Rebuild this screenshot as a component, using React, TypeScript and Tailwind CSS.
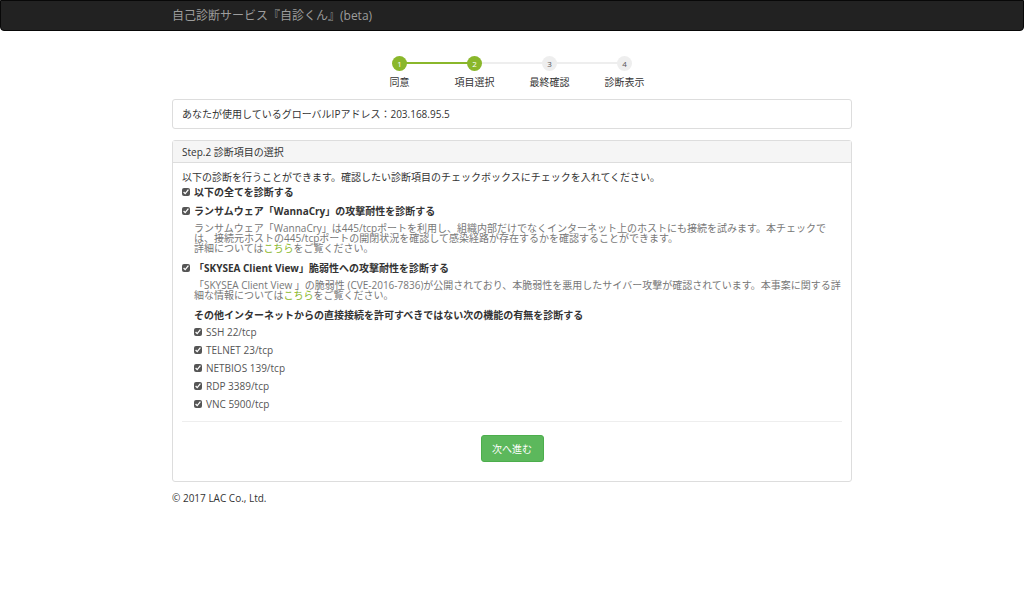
const steps = [
  { n: '1', label: '同意', done: true },
  { n: '2', label: '項目選択', done: true },
  { n: '3', label: '最終確認', done: false },
  { n: '4', label: '診断表示', done: false },
];

const ports = ['SSH 22/tcp', 'TELNET 23/tcp', 'NETBIOS 139/tcp', 'RDP 3389/tcp', 'VNC 5900/tcp'];

function Check() {
  return (
    <input type="checkbox" defaultChecked className="w-[8px] h-[8px] m-0 mr-[4px] accent-[#555] shrink-0" />
  );
}

export default function App() {
  return (
    <div className="min-h-[592px] bg-white text-[#333] text-[10px] leading-[10px]" style={{ fontFamily: '"Open Sans", "Noto Sans CJK JP", sans-serif' }}>
      <div className="h-[31px] bg-[#222] border border-[#080808] rounded-b-[4px]">
        <div className="w-[680px] mx-auto pt-[8px] text-[12px] leading-[14px] text-[#9d9d9d]">自己診断サービス『自診くん』(beta)</div>
      </div>

      <div className="w-[680px] mx-auto">
        {/* stepper */}
        <div className="flex pl-[190px] pt-[25px] h-[62px]">
          {steps.map((s, i) => (
            <div key={s.n} className="relative w-[75px] flex flex-col items-center">
              {i < steps.length - 1 && (
                <div className={`absolute top-[6px] left-[37px] w-[75px] h-[2px] ${steps[i + 1].done ? 'bg-[#8ab72b]' : 'bg-[#eee]'}`} />
              )}
              <div className={`relative z-10 w-[15px] h-[15px] rounded-full flex items-center justify-center text-[8px] ${s.done ? 'bg-[#8ab72b] text-white' : 'bg-[#eee] text-[#555]'}`}>{s.n}</div>
              <div className="mt-[5px] text-[10px] leading-[12px]">{s.label}</div>
            </div>
          ))}
        </div>

        <div className="mt-[6px] border border-[#ddd] rounded-[3px] h-[30px] px-[9px] flex items-center text-[10px]">
          あなたが使用しているグローバルIPアドレス：203.168.95.5
        </div>

        <div className="mt-[11px] border border-[#ddd] rounded-[3px]">
          <div className="h-[22px] bg-[#f5f5f5] border-b border-[#ddd] px-[9px] flex items-center">Step.2 診断項目の選択</div>
          <div className="px-[9px] pt-[9px] pb-[19px]">
            <div>以下の診断を行うことができます。確認したい診断項目のチェックボックスにチェックを入れてください。</div>
            <label className="flex items-center mt-[5px] font-bold"><Check />以下の全てを診断する</label>
            <label className="flex items-center mt-[9px] font-bold"><Check />ランサムウェア「WannaCry」の攻撃耐性を診断する</label>
            <div className="pl-[12px] mt-[7px] text-[#777] leading-[10px]">
              ランサムウェア「WannaCry」は445/tcpポートを利用し、組織内部だけでなくインターネット上のホストにも接続を試みます。本チェックでは、接続元ホストの445/tcpポートの開閉状況を確認して感染経路が存在するかを確認することができます。<br />
              詳細については<span className="text-[#8ab72b]">こちら</span>をご覧ください。
            </div>
            <label className="flex items-center mt-[10px] font-bold"><Check />「SKYSEA Client View」脆弱性への攻撃耐性を診断する</label>
            <div className="pl-[12px] mt-[7px] text-[#777] leading-[10px]">
              「SKYSEA Client View 」の脆弱性 (CVE-2016-7836)が公開されており、本脆弱性を悪用したサイバー攻撃が確認されています。本事案に関する詳細な情報については<span className="text-[#8ab72b]">こちら</span>をご覧ください。
            </div>
            <div className="pl-[12px] mt-[10px] font-bold">その他インターネットからの直接接続を許可すべきではない次の機能の有無を診断する</div>
            <div className="pl-[12px] mt-[3px] flex flex-col">
              {ports.map((p) => (
                <label key={p} className="flex items-center h-[18px] text-[#555]"><Check />{p}</label>
              ))}
            </div>
            <div className="mt-[8px] border-t border-[#eee]" />
            <div className="flex justify-center mt-[13px]">
              <button className="w-[63px] h-[27px] rounded-[3px] bg-[#5cb85c] border border-[#4cae4c] text-white text-[10px]">次へ進む</button>
            </div>
          </div>
        </div>

        <div className="mt-[11px] text-[10px]">© 2017 LAC Co., Ltd.</div>
      </div>
    </div>
  );
}
